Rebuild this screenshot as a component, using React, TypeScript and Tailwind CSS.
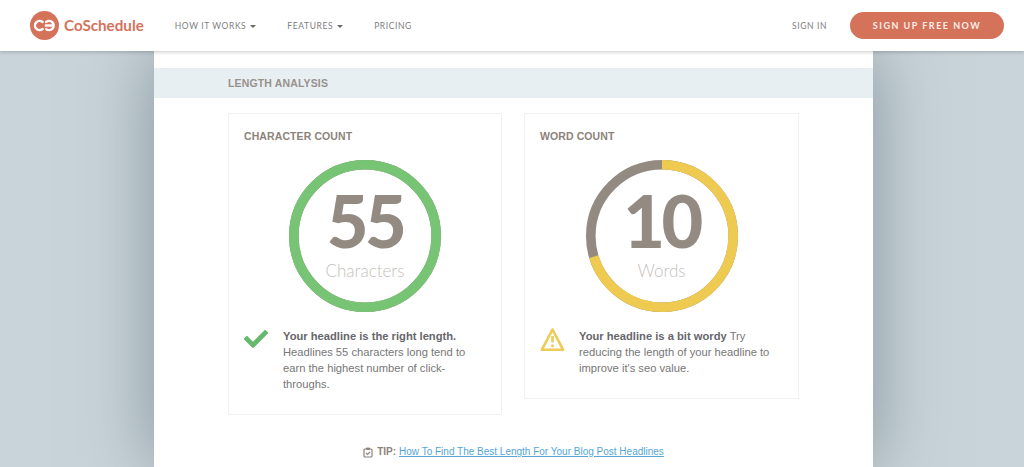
import React from "react";
import {FaCheck} from "react-icons/fa";

const NavLink: React.FC<{ label: string, caret?: boolean }> = ({label, caret}) => (
    <a className="flex items-center pt-[1px] text-[8.5px] tracking-[0.6px] text-[#808080] font-['Lato',sans-serif]">
        {label}
        {caret && <span className="ml-[4px] w-0 h-0 border-x-[3.5px] border-x-transparent border-t-[3px] border-t-[#666]"/>}
    </a>
);

function Logo() {
    return (
        <div className="flex items-center">
            <svg width="29" height="29" viewBox="0 0 29 29">
                <circle cx="14.5" cy="14.5" r="14.5" fill="#d4735a"/>
                <path d="M12.6 11a4.6 4.6 0 1 0 0 7" fill="none" stroke="#fff" strokeWidth="2.4" strokeLinecap="round"/>
                <path d="M16.2 10.9a4.6 4.6 0 1 1 0 7.2M15.8 14.5h7" fill="none" stroke="#fff" strokeWidth="2.4" strokeLinecap="round"/>
            </svg>
            <span className="ml-[5px] text-[15.2px] font-bold text-[#d4735a] font-['Lato',sans-serif]">CoSchedule</span>
        </div>
    );
}

const Ring: React.FC<{ value: string, label: string, color: string, percent: number }> = ({value, label, color, percent}) => {
    const r = 71.2;
    const c = 2 * Math.PI * r;
    return (
        <div className="relative w-[152px] h-[152px] mx-auto">
            <svg width="152" height="152" viewBox="0 0 152 152" className="-rotate-90">
                <circle cx="76" cy="76" r={r} fill="none" stroke="#938a81" strokeWidth="9.6"/>
                <circle cx="76" cy="76" r={r} fill="none" stroke={color} strokeWidth="9.6"
                        strokeDasharray={`${c * percent} ${c}`}/>
            </svg>
            <div className="absolute inset-0 flex flex-col items-center font-['Lato',sans-serif]">
                <span className="mt-[24px] h-[72px] text-[72px] leading-[72px] tracking-[-3.5px] font-black text-[#938a81]">{value}</span>
                <span className="mt-[4px] text-[17px] leading-[22px] font-light text-[#c4c1bd]">{label}</span>
            </div>
        </div>
    );
};

function WarnIcon() {
    return (
        <svg width="25" height="25" viewBox="0 0 25 25" className="shrink-0 mt-[-1px]">
            <path d="M12.5 2.5 L23.2 22.8 H1.8 Z" fill="none" stroke="#eecb55" strokeWidth="2.6" strokeLinejoin="round"/>
            <path d="M12.5 9v6.5" stroke="#eecb55" strokeWidth="2.6"/>
            <circle cx="12.5" cy="18.8" r="1.5" fill="#eecb55"/>
        </svg>
    );
}

const Card: React.FC<{ title: string, className: string, children: React.ReactNode }> = ({title, className, children}) => (
    <div className={`border border-[#f1f1f1] px-[15px] pt-[15px] pb-[22px] ${className}`}>
        <h3 className="text-[10.5px] leading-[14px] font-bold text-[#8d8279] tracking-[0.1px]">{title}</h3>
        <div className="mt-[17px]">{children}</div>
    </div>
);

export default function App() {
    return (
        <div className="relative h-[467px] overflow-hidden bg-[#c9d4da] font-['Liberation_Sans',Arial,sans-serif]">
            <header className="relative z-10 h-[51px] bg-white shadow-[0_1px_4px_rgba(0,0,0,0.22)] flex items-center pl-[30px] pr-[20px]">
                <Logo/>
                <nav className="ml-[31px] flex items-center gap-[31px]">
                    <NavLink label="HOW IT WORKS" caret/>
                    <NavLink label="FEATURES" caret/>
                    <NavLink label="PRICING"/>
                </nav>
                <div className="ml-auto flex items-center gap-[23px]">
                    <NavLink label="SIGN IN"/>
                    <a className="w-[154px] h-[27px] rounded-full bg-[#d4735a] flex items-center justify-center text-[9px] font-bold tracking-[1.5px] text-[#fbeee9] font-['Lato',sans-serif]">
                        SIGN UP FREE NOW
                    </a>
                </div>
            </header>

            <main className="w-[719px] ml-[154px] h-[416px] bg-white pt-[17px] shadow-[0_0_70px_rgba(70,85,95,0.5)]">
                <div className="h-[30px] bg-[#e8eff2] pl-[74px] pt-[1px] flex items-center text-[10.5px] font-bold text-[#98928c] tracking-[0.15px]">
                    LENGTH ANALYSIS
                </div>

                <div className="mt-[15px] pl-[74px] flex items-start gap-[22px]">
                    <Card title="CHARACTER COUNT" className="w-[274px]">
                        <Ring value="55" label="Characters" color="#76c474" percent={1}/>
                        <div className="mt-[16px] flex text-[11.2px] leading-[16px] text-[#777]">
                            <FaCheck className="w-[24px] h-[24px] text-[#63b96c] shrink-0 mt-[-1px]"/>
                            <p className="ml-[15px]">
                                <b className="text-[#66666c]">Your headline is the right length.</b> Headlines 55 characters long tend to earn the highest number of click-throughs.
                            </p>
                        </div>
                    </Card>
                    <Card title="WORD COUNT" className="w-[275px]">
                        <Ring value="10" label="Words" color="#efca50" percent={0.702}/>
                        <div className="mt-[16px] flex text-[11.2px] leading-[16px] text-[#777]">
                            <WarnIcon/>
                            <p className="ml-[14px]">
                                <b className="text-[#66666c]">Your headline is a bit wordy</b> Try reducing the length of your headline to improve it's seo value.
                            </p>
                        </div>
                    </Card>
                </div>

                <p className="mt-[30px] flex items-center justify-center text-[10px] leading-[14px] text-[#8d8279]">
                    <svg width="10" height="11" viewBox="0 0 10 11" className="mr-[4px]">
                        <rect x="1" y="2" width="8" height="8" rx="1" fill="none" stroke="#8d8279" strokeWidth="1.2"/>
                        <rect x="3" y="0.6" width="4" height="2.2" fill="#8d8279"/>
                        <path d="M3 6l1.5 1.5L7 5" fill="none" stroke="#8d8279" strokeWidth="1.1"/>
                    </svg>
                    <b className="font-bold mr-[3px]">TIP:</b>
                    <a className="text-[#55a6d6] underline">How To Find The Best Length For Your Blog Post Headlines</a>
                </p>
            </main>
        </div>
    );
}
